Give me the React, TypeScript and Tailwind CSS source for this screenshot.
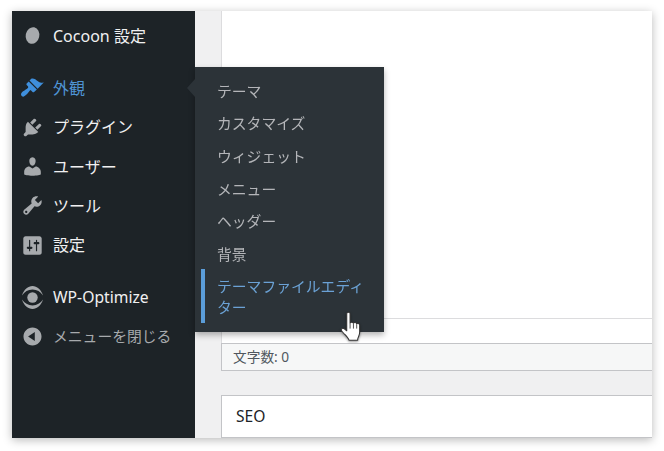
import React from "react";

const font = { fontFamily: '"Noto Sans", "Noto Sans CJK JP", sans-serif' };

const paths = {
  brush: "M14.48 11.06L7.41 3.99l1.5-1.5c.5-.56 2.3-.47 3.51.32 1.21.8 1.43 1.28 2.91 2.1 1.18.64 2.45 1.26 4.45.85zm-.71.71L6.7 4.7 4.93 6.47c-.39.39-.39 1.02 0 1.41l1.06 1.06c.39.39.39 1.03 0 1.42-.6.6-1.43 1.11-2.21 1.69-.35.26-.7.53-1.01.84C1.43 13.23 0 15 0 15.99 0 17 1 18 2 18c1 0 2.65-1.56 3.03-2.03.3-.31.57-.65.83-1 .59-.79 1.1-1.61 1.69-2.2.39-.39 1.03-.39 1.42 0l1.06 1.06c.39.39 1.02.39 1.41 0z",
  plugin: "M13.11 4.36L9.87 7.6 8 5.73l3.24-3.24c.35-.34 1.05-.2 1.56.32.52.51.66 1.21.31 1.55zm-8 1.77l.91-1.12 9.01 9.01-1.19.84c-.71.71-2.63 1.16-3.82 1.16H6.14L4.9 17.26c-.59.59-1.54.59-2.12 0-.59-.58-.59-1.53 0-2.12l1.24-1.24v-3.88c0-1.13.4-3.19 1.09-3.89zm7.26 3.97l3.24-3.24c.34-.35 1.04-.21 1.55.31.52.51.66 1.21.31 1.55l-3.24 3.25z",
  users: "M10 9.25c-2.27 0-2.73-3.44-2.73-3.44C7 4.02 7.82 2 9.97 2c2.16 0 2.98 2.02 2.71 3.81 0 0-.41 3.44-2.68 3.44zm0 2.57L12.72 10c2.39 0 4.52 2.33 4.52 4.53v2.49s-3.65 1.13-7.24 1.13c-3.65 0-7.24-1.13-7.24-1.13v-2.49c0-2.25 1.94-4.48 4.47-4.48z",
  tools: "M16.68 9.77c-1.34 1.34-3.3 1.67-4.95.99l-5.41 6.52c-.99.99-2.59.99-3.58 0s-.99-2.59 0-3.57l6.52-5.42c-.68-1.65-.35-3.61.99-4.95 1.28-1.28 3.12-1.62 4.72-1.06l-2.89 2.89 2.82 2.82 2.86-2.87c.53 1.58.18 3.39-1.08 4.65zM3.81 16.21c.4.39 1.04.39 1.43 0 .4-.4.4-1.04 0-1.43-.39-.4-1.03-.4-1.43 0-.39.39-.39 1.03 0 1.43z",
  settings: "M18 16V4c0-1.1-.9-2-2-2H4c-1.1 0-2 .9-2 2v12c0 1.1.9 2 2 2h12c1.1 0 2-.9 2-2zM8 11h1c.55 0 1 .45 1 1s-.45 1-1 1H8v1.5c0 .28-.22.5-.5.5s-.5-.22-.5-.5V13H6c-.55 0-1-.45-1-1s.45-1 1-1h1V5.5c0-.28.22-.5.5-.5s.5.22.5.5V11zm5-2h-1c-.55 0-1-.45-1-1s.45-1 1-1h1V5.5c0-.28.22-.5.5-.5s.5.22.5.5V7h1c.55 0 1 .45 1 1s-.45 1-1 1h-1v5.5c0 .28-.22.5-.5.5s-.5-.22-.5-.5V9z",
  collapse: "M10 2.16c4.33 0 7.84 3.51 7.84 7.84s-3.51 7.84-7.84 7.84S2.16 14.33 2.16 10 5.71 2.16 10 2.16zm2 11.72V6.12L6.18 9.97z",
};

function Dash({ d, color = "#a7aaad" }: { d: string; color?: string }) {
  return (
    <svg viewBox="0 0 20 20" className="w-[23px] h-[23px]" fill={color}>
      <path d={d} />
    </svg>
  );
}

function CocoonIcon() {
  return (
    <svg viewBox="0 0 23 23" className="w-[23px] h-[23px]">
      <ellipse cx="11.5" cy="11.5" rx="6.8" ry="8.4" transform="rotate(12 11.5 11.5)" fill="#a7aaad" />
    </svg>
  );
}

function OptimizeIcon() {
  return (
    <svg viewBox="0 0 23 25" className="w-[23px] h-[25px]" fill="#a7aaad">
      <path d="M1 10.500C3 4.500 7 1 11.500 1S20 4.500 22 10.500C19.500 6.800 16 4.600 11.500 4.600S3.500 6.800 1 10.500z" />
      <path d="M1 14.500c2 6 6 9.500 10.500 9.500S20 20.500 22 14.500c-2.500 3.700-6 5.900-10.500 5.900S3.500 18.200 1 14.500z" />
      <circle cx="11.5" cy="12.5" r="5.200" />
    </svg>
  );
}

function Row({ icon, label, className = "text-[#f0f0f1] text-[16px]" }: { icon: React.ReactNode; label: string; className?: string }) {
  return (
    <div className={`flex items-center h-[39.3px] leading-none ${className}`}>
      <span className="w-[41px] pl-[9px] flex items-center justify-start shrink-0">{icon}</span>
      <span className="whitespace-nowrap">{label}</span>
    </div>
  );
}

function Sub({ label }: { label: string }) {
  return (
    <div className="h-[32.6px] flex items-center pl-[22px] text-[14.8px] leading-none text-[#c3c4c7] opacity-90 whitespace-nowrap">
      {label}
    </div>
  );
}

function Hand() {
  return (
    <svg
      viewBox="0 0 20 30"
      preserveAspectRatio="none"
      className="absolute left-[328px] top-[300px] w-[24px] h-[33px] drop-shadow-[0_1px_1px_rgba(0,0,0,0.4)]"
    >
      <path
        d="M5.600 2.500c0-1.800 2.800-1.800 2.800 0V11c0-.9 2.600-1.100 2.800.2.300-1 2.500-.9 2.700.5.500-.8 2.500-.5 2.500 1.100V19c0 2.500-.6 3.500-1.200 5-.4 1.100-.5 2-.5 2.500H7.500c-.5-1.800-2-3.500-3.500-5.200C2.800 20 1.200 18.500 1 17.300c-.2-1.500 1.500-2 2.700-1l1.900 1.700z"
        fill="#fff"
        stroke="#333"
        strokeWidth="0.900"
        strokeLinejoin="round"
      />
      <path d="M8.400 11v5M11.200 11.500V16M13.900 12v4" stroke="#444" strokeWidth="0.800" fill="none" />
    </svg>
  );
}

export default function App() {
  return (
    <div className="w-[664px] h-[451px] bg-white pl-[12px] pt-[11px] overflow-hidden" style={font}>
      <div className="relative flex w-[640px] h-[427px] shadow-[0_2px_9px_rgba(0,0,0,0.28)]">
        <aside className="w-[183px] shrink-0 bg-[#1d2327] pt-[5px]">
          <Row icon={<CocoonIcon />} label="Cocoon 設定" />
          <div className="h-[13px]" />
          <Row icon={<Dash d={paths.brush} color="#3f8fdc" />} label="外観" className="text-[#4f94d4] text-[16px]" />
          <Row icon={<Dash d={paths.plugin} />} label="プラグイン" />
          <Row icon={<Dash d={paths.users} />} label="ユーザー" />
          <Row icon={<Dash d={paths.tools} />} label="ツール" />
          <Row icon={<Dash d={paths.settings} />} label="設定" />
          <div className="h-[13px]" />
          <Row icon={<OptimizeIcon />} label="WP-Optimize" className="text-[#f0f0f1] text-[15.7px]" />
          <Row icon={<Dash d={paths.collapse} />} label="メニューを閉じる" className="text-[#a7aaad] text-[14.8px]" />
        </aside>

        <main className="flex-1 min-w-0 bg-[#f0f0f1] pl-[26px] flex flex-col overflow-hidden">
          <div className="h-[308px] shrink-0 bg-white border-l border-b border-[#dcdcde]" />
          <div className="h-[24px] shrink-0 bg-white border-l border-[#dcdcde]" />
          <div className="h-[28px] shrink-0 bg-[#f6f7f7] border border-r-0 border-[#c3c4c7] flex items-center pl-[11px] text-[13.7px] text-[#50575e]">
            文字数: 0
          </div>
          <div className="h-[24px] shrink-0" />
          <div className="flex-1 bg-white border border-r-0 border-[#c3c4c7] flex items-center pl-[14px] text-[15.6px] font-normal text-[#1d2327]">
            SEO
          </div>
        </main>

        <div className="absolute left-[183px] top-[56px] w-[189px] h-[265px] bg-[#2c3338] pt-[8px] shadow-[0_3px_6px_rgba(0,0,0,0.3)]">
          <div className="absolute left-[-8px] top-[12px] w-0 h-0 border-y-[9px] border-y-transparent border-r-[8px] border-r-[#2c3338]" />
          <Sub label="テーマ" />
          <Sub label="カスタマイズ" />
          <Sub label="ウィジェット" />
          <Sub label="メニュー" />
          <Sub label="ヘッダー" />
          <Sub label="背景" />
          <div className="mt-[-1px] pl-[22px] py-[6px] text-[14.8px] leading-[21px] text-[#72aee6] opacity-90">
            テーマファイルエディ
            <br />
            ター
          </div>
          <div className="absolute left-[6px] top-[202px] w-[4px] h-[54px] bg-[#5b9dd9]" />
        </div>

        <Hand />
      </div>
    </div>
  );
}
